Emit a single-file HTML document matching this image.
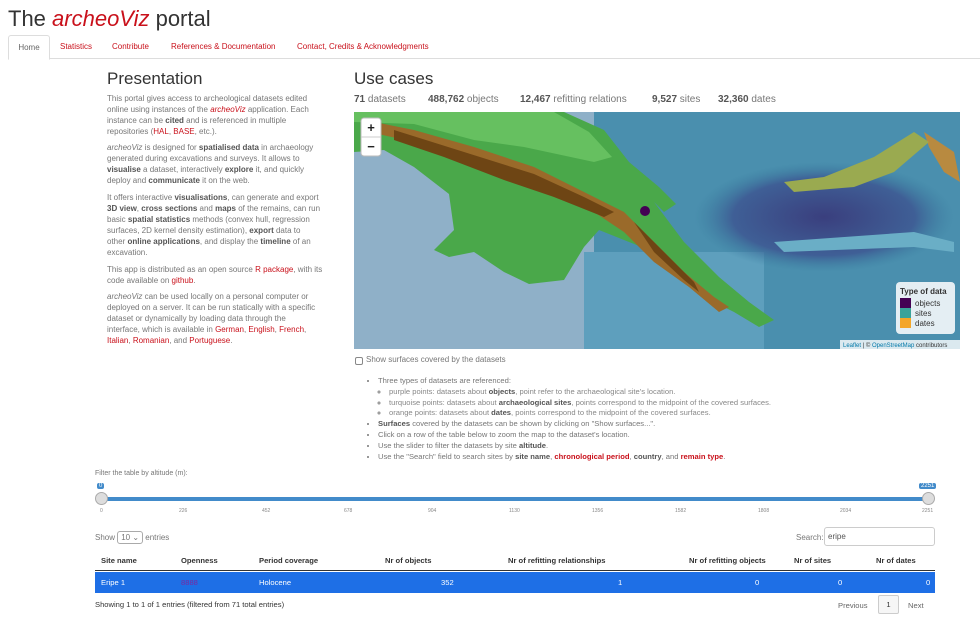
<!DOCTYPE html>
<html><head><meta charset="utf-8"><style>
*{margin:0;padding:0;box-sizing:border-box}
body{width:980px;height:623px;overflow:hidden;background:#fff;font-family:"Liberation Sans",sans-serif;color:#777;position:relative}
.a{position:absolute}
.r{color:#c9111b}
b{color:#555;font-weight:bold}
h1{position:absolute;left:8px;top:6px;font-weight:normal;font-size:22px;color:#333}
.tabs{position:absolute;left:8px;top:35px;width:972px;height:24px;border-bottom:1px solid #ddd}
.tab{position:absolute;top:0;height:24px;font-size:8px;line-height:24px;color:#c9111b}
.tab.on{border:1px solid #ddd;border-bottom:1px solid #fff;color:#666;background:#fff;border-radius:3px 3px 0 0;height:25px}
h2{position:absolute;font-weight:normal;font-size:17px;color:#333}
.txt{position:absolute;left:107px;font-size:8px;line-height:11px;white-space:nowrap}
.stats{position:absolute;top:94px;font-size:10px;color:#777}
.stats b{color:#555}
ul{font-size:7.6px;line-height:10.8px;white-space:nowrap}
</style></head><body>
<h1>The <i class="r">archeoViz</i> portal</h1>
<div class="tabs">
<div class="tab on" style="left:0;width:42px;text-align:center">Home</div>
<div class="tab" style="left:52px">Statistics</div>
<div class="tab" style="left:104px">Contribute</div>
<div class="tab" style="left:163px">References &amp; Documentation</div>
<div class="tab" style="left:289px">Contact, Credits &amp; Acknowledgments</div>
</div>
<h2 style="left:107px;top:69px">Presentation</h2>
<h2 style="left:354px;top:69px">Use cases</h2>
<div class="txt" style="top:93px">This portal gives access to archeological datasets edited<br>online using instances of the <i class="r">archeoViz</i> application. Each<br>instance can be <b>cited</b> and is referenced in multiple<br>repositories (<span class="r">HAL</span>, <span class="r">BASE</span>, etc.).</div>
<div class="txt" style="top:142px"><i>archeoViz</i> is designed for <b>spatialised data</b> in archaeology<br>generated during excavations and surveys. It allows to<br><b>visualise</b> a dataset, interactively <b>explore</b> it, and quickly<br>deploy and <b>communicate</b> it on the web.</div>
<div class="txt" style="top:192px">It offers interactive <b>visualisations</b>, can generate and export<br><b>3D view</b>, <b>cross sections</b> and <b>maps</b> of the remains, can run<br>basic <b>spatial statistics</b> methods (convex hull, regression<br>surfaces, 2D kernel density estimation), <b>export</b> data to<br>other <b>online applications</b>, and display the <b>timeline</b> of an<br>excavation.</div>
<div class="txt" style="top:264px">This app is distributed as an open source <span class="r">R package</span>, with its<br>code available on <span class="r">github</span>.</div>
<div class="txt" style="top:291px"><i>archeoViz</i> can be used locally on a personal computer or<br>deployed on a server. It can be run statically with a specific<br>dataset or dynamically by loading data through the<br>interface, which is available in <span class="r">German</span>, <span class="r">English</span>, <span class="r">French</span>,<br><span class="r">Italian</span>, <span class="r">Romanian</span>, and <span class="r">Portuguese</span>.</div>
<div class="stats" style="left:354px"><b>71</b> datasets</div>
<div class="stats" style="left:428px"><b>488,762</b> objects</div>
<div class="stats" style="left:520px"><b>12,467</b> refitting relations</div>
<div class="stats" style="left:652px"><b>9,527</b> sites</div>
<div class="stats" style="left:718px"><b>32,360</b> dates</div>
<svg class="a" style="left:354px;top:112px" width="606" height="237" viewBox="0 0 606 237">
<defs><radialGradient id="dp" cx="0.5" cy="0.5" r="0.5"><stop offset="0" stop-color="#3a3f7e"/><stop offset="0.7" stop-color="#3f5f96"/><stop offset="1" stop-color="#3a7fa0" stop-opacity="0"/></radialGradient></defs>
<rect width="606" height="237" fill="#8fb0c8"/>
<rect x="240" width="366" height="237" fill="#4a8fae"/>
<rect x="230" y="140" width="180" height="97" fill="#5e9fbd"/>
<ellipse cx="470" cy="105" rx="130" ry="55" fill="url(#dp)"/>
<path d="M0 0H210L250 18L275 50L305 75L322 92L310 100L300 90L330 130L365 165L395 190L420 208L405 215L380 200L350 185L325 160L300 140L270 128L245 118L230 135L210 168L175 172L150 160L120 140L95 145L80 138L100 118L95 82L60 55L30 38L0 40Z" fill="#4aa84a"/>
<path d="M0 0H200L235 20L258 45L240 50L170 35L120 28L60 12L0 10Z" fill="#66c060"/>
<path d="M10 8L60 18L120 35L180 55L230 80L270 100L300 130L330 160L360 185L375 195L365 200L335 175L300 150L270 120L240 100L200 85L160 65L110 48L60 30L15 20Z" fill="#9a6a2a"/>
<path d="M40 18L110 40L180 62L230 85L260 100L250 105L200 85L150 68L90 45L40 28Z" fill="#6e4514"/>
<path d="M280 110L310 140L340 170L345 180L330 168L300 140Z" fill="#6e4514"/>
<path d="M570 20L600 40L606 70L590 60L575 35Z" fill="#b88a40"/>
<path d="M420 130L560 120L600 130L600 140L560 135L430 140Z" fill="#6aaec6"/>
<path d="M430 70L470 65L520 45L560 20L575 30L540 60L500 75L440 80Z" fill="#9aaa50"/>
<circle cx="291" cy="99" r="5" fill="#440154"/>
<rect x="7" y="6" width="20" height="38" rx="3" fill="#fff" stroke="#bbb"/>
<line x1="7" y1="25" x2="27" y2="25" stroke="#ccc"/>
<text x="17" y="20" font-size="13" font-weight="bold" text-anchor="middle" fill="#222" font-family="Liberation Sans">+</text>
<text x="17" y="39" font-size="13" font-weight="bold" text-anchor="middle" fill="#222" font-family="Liberation Sans">−</text>
<rect x="542" y="170" width="59" height="52" rx="4" fill="#fff" fill-opacity="0.85"/>
<text x="546" y="182" font-size="8" font-weight="bold" fill="#333" font-family="Liberation Sans">Type of data</text>
<rect x="546" y="186" width="11" height="10" fill="#440154"/><text x="561" y="194" font-size="8" fill="#333" font-family="Liberation Sans">objects</text>
<rect x="546" y="196" width="11" height="10" fill="#3aa39a"/><text x="561" y="204" font-size="8" fill="#333" font-family="Liberation Sans">sites</text>
<rect x="546" y="206" width="11" height="10" fill="#f4a628"/><text x="561" y="214" font-size="8" fill="#333" font-family="Liberation Sans">dates</text>
<rect x="486" y="228" width="120" height="9" fill="#fff" fill-opacity="0.8"/>
<text x="489" y="235" font-size="6" fill="#333" font-family="Liberation Sans"><tspan fill="#0078a8">Leaflet</tspan> | © <tspan fill="#0078a8">OpenStreetMap</tspan> contributors</text>
</svg>
<div class="a" style="left:355px;top:357px;width:8px;height:8px;border:1px solid #888;border-radius:2px"></div>
<div class="a" style="left:366px;top:355px;font-size:8px">Show surfaces covered by the datasets</div>
<ul class="a" style="left:378px;top:376px;list-style:disc">
<li>Three types of datasets are referenced:
<ul style="list-style:circle;margin-left:11px;color:#888">
<li>purple points: datasets about <b>objects</b>, point refer to the archaeological site's location.</li>
<li>turquoise points: datasets about <b>archaeological sites</b>, points correspond to the midpoint of the covered surfaces.</li>
<li>orange points: datasets about <b>dates</b>, points correspond to the midpoint of the covered surfaces.</li></ul></li>
<li><b>Surfaces</b> covered by the datasets can be shown by clicking on "Show surfaces...".</li>
<li>Click on a row of the table below to zoom the map to the dataset's location.</li>
<li>Use the slider to filter the datasets by site <b>altitude</b>.</li>
<li>Use the "Search" field to search sites by <b>site name</b>, <b class="r">chronological period</b>, <b>country</b>, and <b class="r">remain type</b>.</li>
</ul>
<div class="a" style="left:95px;top:470px;font-size:7px">Filter the table by altitude (m):</div>
<div class="a" style="left:97px;top:483px;background:#428bca;color:#fff;font-size:6px;padding:0 2px;border-radius:2px">0</div>
<div class="a" style="left:919px;top:483px;background:#428bca;color:#fff;font-size:6px;padding:0 2px;border-radius:2px">2251</div>
<div class="a" style="left:100px;top:497px;width:830px;height:4px;background:#428bca;border-radius:2px"></div>
<div class="a" style="left:95px;top:492px;width:13px;height:13px;border-radius:50%;background:#ddd;border:1px solid #aaa"></div>
<div class="a" style="left:922px;top:492px;width:13px;height:13px;border-radius:50%;background:#ddd;border:1px solid #aaa"></div>
<div class="a" style="left:95px;top:503px;width:840px;height:14px;font-size:5px;color:#888">
<span class="a" style="left:5px;top:5px">0</span><span class="a" style="left:84px;top:5px">226</span><span class="a" style="left:167px;top:5px">452</span><span class="a" style="left:249px;top:5px">678</span><span class="a" style="left:333px;top:5px">904</span><span class="a" style="left:414px;top:5px">1130</span><span class="a" style="left:497px;top:5px">1356</span><span class="a" style="left:580px;top:5px">1582</span><span class="a" style="left:663px;top:5px">1808</span><span class="a" style="left:745px;top:5px">2034</span><span class="a" style="left:827px;top:5px">2251</span>
</div>
<div class="a" style="left:95px;top:531px;font-size:8px">Show <span style="display:inline-block;border:1px solid #aaa;border-radius:3px;padding:1px 3px">10 ⌄</span> entries</div>
<div class="a" style="left:796px;top:533px;font-size:8px">Search:</div>
<div class="a" style="left:824px;top:527px;width:111px;height:19px;border:1px solid #ccc;border-radius:3px;font-size:8px;line-height:17px;padding-left:3px;color:#555">eripe</div>
<div class="a" style="left:95px;top:550px;width:840px;height:21px;border-bottom:1px solid #333;font-size:7.6px;font-weight:bold;color:#333;line-height:21px">
<span class="a" style="left:6px">Site name</span><span class="a" style="left:86px">Openness</span><span class="a" style="left:164px">Period coverage</span><span class="a" style="left:290px">Nr of objects</span><span class="a" style="left:413px">Nr of refitting relationships</span><span class="a" style="left:594px">Nr of refitting objects</span><span class="a" style="left:699px">Nr of sites</span><span class="a" style="left:781px">Nr of dates</span>
</div>
<div class="a" style="left:95px;top:572px;width:840px;height:21px;background:#1e6fe6;color:#fff;font-size:7.6px;line-height:21px">
<span class="a" style="left:6px">Eripe 1</span><span class="a" style="left:86px;color:#7a2aa0">8888</span><span class="a" style="left:164px">Holocene</span><span class="a" style="left:346px">352</span><span class="a" style="left:523px">1</span><span class="a" style="left:660px">0</span><span class="a" style="left:743px">0</span><span class="a" style="left:831px">0</span>
</div>
<div class="a" style="left:95px;top:600px;font-size:7.6px;color:#333">Showing 1 to 1 of 1 entries (filtered from 71 total entries)</div>
<div class="a" style="left:838px;top:601px;font-size:7.6px;color:#666">Previous</div>
<div class="a" style="left:878px;top:595px;width:21px;height:19px;border:1px solid #ccc;border-radius:2px;background:#f6f6f6;font-size:7.6px;text-align:center;line-height:17px;color:#333">1</div>
<div class="a" style="left:908px;top:601px;font-size:7.6px;color:#666">Next</div>
</body></html>
